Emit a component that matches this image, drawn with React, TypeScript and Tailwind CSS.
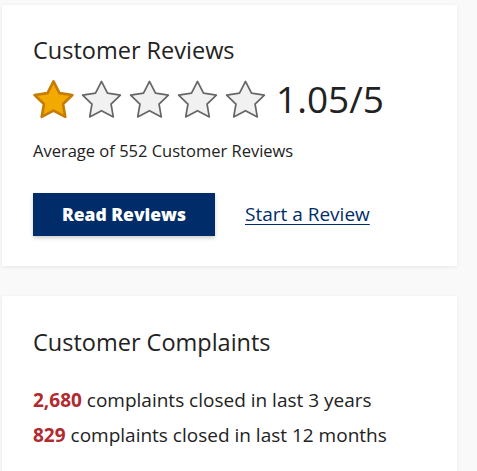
import React from 'react';

function Star({ filled }: { filled?: boolean }) {
  return (
    <svg width="41" height="41" viewBox="1.9 2 20.2 19.2" className="shrink-0">
      <path
        d="M12 2.7l2.95 5.75 6.35.95-4.6 4.45 1.12 6.35L12 17.1l-5.82 3.1 1.12-6.35-4.6-4.45 6.35-.95z"
        fill={filled ? '#f2a900' : '#f1f1f1'}
        stroke={filled ? '#c67c00' : '#666'}
        strokeWidth={filled ? 1.3 : 0.85}
        strokeLinejoin="round"
      />
    </svg>
  );
}

export default function App() {
  return (
    <div className="min-h-[471px] bg-[#f9f9f9] pl-[2px] pt-[5px] font-['Open_Sans',sans-serif] text-[#222]">
      <section className="w-[455px] bg-white px-[31px] pt-[31px] pb-[30px] shadow-[0_1px_4px_rgba(0,0,0,0.08)]">
        <h2 className="text-[23.5px] leading-[28px]">Customer Reviews</h2>
        <div className="mt-[13px] flex items-center">
          <div className="flex gap-[7px]">
            <Star filled />
            <Star />
            <Star />
            <Star />
            <Star />
          </div>
          <span className="ml-[10px] text-[37px] leading-[44px]">1.05/5</span>
        </div>
        <p className="mt-[19px] text-[16.5px] leading-[22px]">Average of 552 Customer Reviews</p>
        <div className="mt-[31px] flex items-center gap-[30px]">
          <button className="h-[43px] w-[182px] bg-[#002d69] text-[17.5px] font-extrabold text-white shadow-[0_2px_4px_rgba(0,0,0,0.2)]">
            Read Reviews
          </button>
          <a href="#" className="text-[19px] text-[#002d69] underline underline-offset-[3px]">Start a Review</a>
        </div>
      </section>

      <section className="mt-[30px] w-[455px] bg-white px-[31px] pt-[32px] pb-[30px] shadow-[0_1px_4px_rgba(0,0,0,0.08)]">
        <h2 className="text-[23.5px] leading-[28px]">Customer Complaints</h2>
        <div className="mt-[31px] space-y-[9px] text-[19px] leading-[26px]">
          <p><b className="text-[#b02a30]">2,680</b> complaints closed in last 3 years</p>
          <p><b className="text-[#b02a30]">829</b> complaints closed in last 12 months</p>
        </div>
      </section>
    </div>
  );
}
